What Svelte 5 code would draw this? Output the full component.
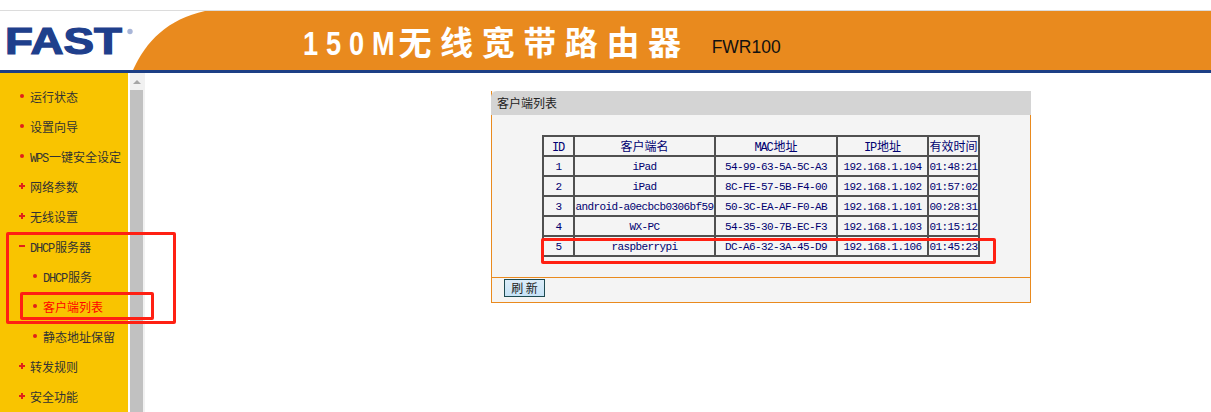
<script>
  const menu = [
    { label: '运行状态', mark: 'dot' },
    { label: '设置向导', mark: 'dot' },
    { label: 'WPS一键安全设定', mark: 'dot' },
    { label: '网络参数', mark: 'plus' },
    { label: '无线设置', mark: 'plus' },
    { label: 'DHCP服务器', mark: 'minus' },
    { label: 'DHCP服务', mark: 'dot', sub: true },
    { label: '客户端列表', mark: 'dot', sub: true, active: true },
    { label: '静态地址保留', mark: 'dot', sub: true },
    { label: '转发规则', mark: 'plus' },
    { label: '安全功能', mark: 'plus' }
  ];
  const heads = ['ID', '客户端名', 'MAC地址', 'IP地址', '有效时间'];
  const clients = [
    ['1', 'iPad', '54-99-63-5A-5C-A3', '192.168.1.104', '01:48:21'],
    ['2', 'iPad', '8C-FE-57-5B-F4-00', '192.168.1.102', '01:57:02'],
    ['3', 'android-a0ecbcb0306bf59', '50-3C-EA-AF-F0-AB', '192.168.1.101', '00:28:31'],
    ['4', 'WX-PC', '54-35-30-7B-EC-F3', '192.168.1.103', '01:15:12'],
    ['5', 'raspberrypi', 'DC-A6-32-3A-45-D9', '192.168.1.106', '01:45:23']
  ];
  const split = (s) => s.match(/[\x00-\x7f]+|[^\x00-\x7f]+/g);
  const isLatin = (s) => /^[\x00-\x7f]/.test(s);
</script>

{#snippet mixed(text)}
  {#each split(text) as part}
    {#if isLatin(part)}<span class="latin">{part}</span>{:else}{part}{/if}
  {/each}
{/snippet}

<div class="page">
  <header class="top">
    <div class="logo">
      <svg width="206" height="59" viewBox="0 0 206 59">
        <path class="arc" d="M133 59C146 30 168 8 205 0H206V59Z" />
        <text class="fast" x="5" y="43" textLength="117" lengthAdjust="spacingAndGlyphs">FAST</text>
        <circle class="reg" cx="130" cy="20.500" r="2.700" />
      </svg>
    </div>
    <div class="banner">
      <h1 class="title"><span class="model-num">150M</span>无线宽带路由器</h1>
      <span class="model">FWR100</span>
    </div>
  </header>

  <div class="main">
    <nav class="side">
      {#each menu as item}
        <div class="item" class:sub={item.sub} class:active={item.active}>
          <span class="mark {item.mark}"></span>
          <span>{@render mixed(item.label)}</span>
        </div>
      {/each}
    </nav>
    <div class="scroll">
      <div class="arrow"></div>
      <div class="thumb"></div>
    </div>
    <main class="content">
      <section class="panel">
        <div class="panel-head">客户端列表</div>
        <div class="panel-body">
          <table>
            <colgroup>
              <col class="c1" /><col class="c2" /><col class="c3" /><col class="c4" /><col class="c5" />
            </colgroup>
            <thead>
              <tr>
                {#each heads as head}<th>{@render mixed(head)}</th>{/each}
              </tr>
            </thead>
            <tbody>
              {#each clients as row}
                <tr>
                  {#each row as cell}<td>{cell}</td>{/each}
                </tr>
              {/each}
            </tbody>
          </table>
        </div>
        <div class="panel-foot">
          <button type="button">刷 新</button>
        </div>
      </section>
    </main>
  </div>

  <div class="note note-menu"></div>
  <div class="note note-item"></div>
  <div class="note note-row"></div>
</div>

<style>
  :global(body) {
    margin: 0;
    background: #fff;
  }
  .page {
    height: 412px;
    overflow: hidden;
    position: relative;
    padding-top: 10px;
    box-sizing: border-box;
    font-family: "Noto Sans CJK SC", sans-serif;
    font-size: 12px;
  }
  .latin {
    font-family: "Liberation Mono", monospace;
    font-size: 12px;
    line-height: 1;
    letter-spacing: -1.200px;
    margin-right: 1px;
  }
  .top {
    display: flex;
    height: 59px;
    border-top: 1px solid #dcdcdc;
    border-bottom: 3px solid #1c3f85;
  }
  .logo {
    flex: none;
    width: 206px;
    height: 59px;
  }
  .logo svg {
    display: block;
  }
  .arc {
    fill: #e98a1e;
  }
  .fast {
    font-family: "Liberation Sans", sans-serif;
    font-weight: 700;
    font-size: 36px;
    fill: #1f3f8c;
    stroke: #1f3f8c;
    stroke-width: 1.200px;
  }
  .reg {
    fill: #a9b6d8;
  }
  .banner {
    flex: 1;
    background: #e98a1e;
    display: flex;
    align-items: flex-start;
    padding-left: 97px;
  }
  .title {
    margin: 6px 0 0;
    font-family: "Noto Sans CJK SC", sans-serif;
    font-weight: 700;
    font-size: 33px;
    line-height: 48px;
    letter-spacing: 8.600px;
    color: #fff;
    white-space: nowrap;
  }
  .model-num {
    display: inline-block;
    font-family: "Liberation Sans", sans-serif;
    font-weight: 700;
    font-size: 34px;
    letter-spacing: 9.850px;
    transform: scaleX(0.8);
    transform-origin: left center;
    margin-right: -29px;
  }
  .model {
    margin: 25px 0 0 22px;
    font-family: "Liberation Sans", sans-serif;
    font-size: 17.500px;
    line-height: 22px;
    color: #111;
  }
  .main {
    display: flex;
    height: 339px;
  }
  .side {
    flex: none;
    width: 128px;
    background: #f9c400;
    padding-top: 9px;
    box-sizing: border-box;
    margin-right: 2px;
    color: #333;
  }
  .item {
    display: flex;
    align-items: center;
    height: 30px;
    box-sizing: border-box;
    padding: 0 0 2px 30px;
    position: relative;
    white-space: nowrap;
  }
  .item.sub {
    padding-left: 43px;
  }
  .item.active {
    color: #f00;
  }
  .mark {
    position: absolute;
    background: #e0201a;
  }
  .mark.dot {
    left: 20px;
    top: 12px;
    width: 4px;
    height: 4px;
    border-radius: 50%;
  }
  .sub .mark.dot {
    left: 33px;
  }
  .mark.minus,
  .mark.plus {
    left: 19px;
    top: 13px;
    width: 6px;
    height: 2px;
  }
  .mark.plus::after {
    content: "";
    position: absolute;
    left: 2px;
    top: -2px;
    width: 2px;
    height: 6px;
    background: #e0201a;
  }
  .scroll {
    flex: none;
    width: 15px;
    background: #f1f1f1;
    box-sizing: border-box;
    padding-top: 7px;
  }
  .arrow {
    width: 0;
    height: 0;
    margin-left: 3px;
    border: 4px solid transparent;
    border-top: 0;
    border-bottom: 4px solid #a6a6a6;
  }
  .thumb {
    width: 13px;
    height: 330px;
    margin-top: 6px;
    background: #c1c1c1;
  }
  .content {
    flex: 1;
    min-width: 0;
    padding: 18px 0 0 346px;
  }
  .panel {
    width: 540px;
    box-sizing: border-box;
    background: #f4f4f4;
    border-left: 1px solid #e98a1e;
    border-right: 1px solid #e98a1e;
    border-bottom: 1px solid #e98a1e;
  }
  .panel-head {
    height: 24px;
    margin: 0 -1px;
    padding-left: 6px;
    background: #d4d4d4;
    border-top-left-radius: 6px;
    line-height: 24px;
    color: #222;
  }
  .panel-body {
    height: 163px;
    box-sizing: border-box;
    padding-top: 20px;
    border-bottom: 1px solid #e98a1e;
  }
  table {
    width: 437px;
    margin-left: 50px;
    table-layout: fixed;
    border-collapse: collapse;
    border: 2px solid #505050;
    color: #000070;
  }
  .c1 { width: 31px; }
  .c2 { width: 141px; }
  .c3 { width: 122px; }
  .c4 { width: 91px; }
  .c5 { width: 51px; }
  th, td {
    height: 18px;
    padding: 0;
    border: 2px solid #505050;
    text-align: center;
    white-space: nowrap;
    overflow: hidden;
    font-weight: 400;
  }
  th {
    font-size: 12px;
    line-height: 18px;
  }
  td {
    box-sizing: border-box;
    padding-top: 2px;
    font-family: "Liberation Mono", monospace;
    font-size: 11px;
    letter-spacing: -0.600px;
    line-height: 16px;
  }
  .panel-foot {
    height: 24px;
    box-sizing: border-box;
    padding: 1px 0 0 12px;
  }
  button {
    display: block;
    width: 41px;
    height: 18px;
    padding: 0;
    box-sizing: border-box;
    border: 1px solid #1d4a50;
    background: linear-gradient(#dcecf8, #c6e2f6);
    font-family: "Noto Sans CJK SC", sans-serif;
    font-size: 12px;
    line-height: 16px;
    color: #222;
  }
  .note {
    position: absolute;
    box-sizing: border-box;
    border: 3px solid #ff2013;
    border-radius: 2px;
  }
  .note-menu {
    left: 6px;
    top: 232px;
    width: 170px;
    height: 92px;
  }
  .note-item {
    left: 20px;
    top: 292px;
    width: 134px;
    height: 28px;
  }
  .note-row {
    left: 541px;
    top: 238px;
    width: 455px;
    height: 26px;
  }
</style>
